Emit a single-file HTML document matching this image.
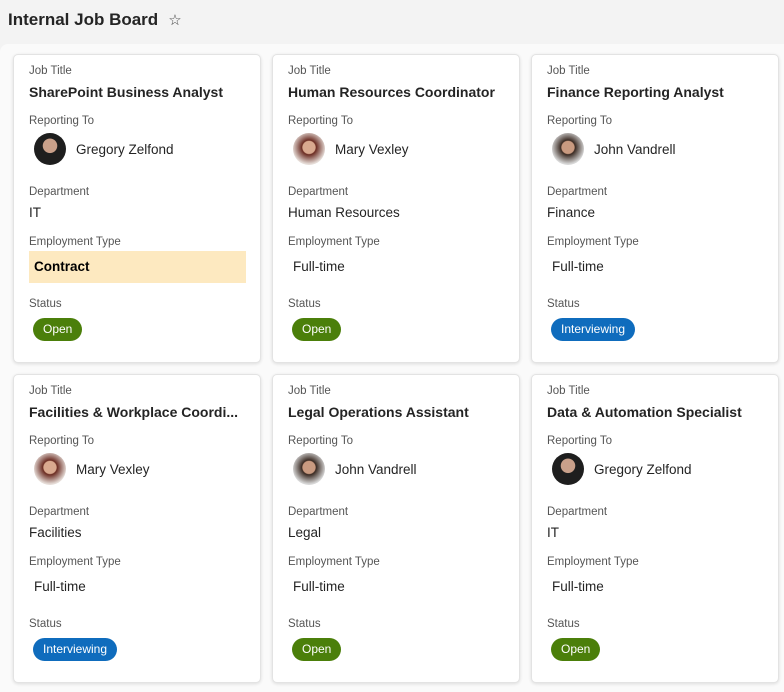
<!DOCTYPE html>
<html><head><style>
body{margin:0;width:784px;height:692px;background:#f3f3f3;font-family:"Liberation Sans",sans-serif;position:relative;overflow:hidden}
.hdr{position:absolute;left:8px;top:10px;font-size:17px;font-weight:600;color:#242424}
.hdr span{font-size:15px;margin-left:10px;font-weight:normal;color:#444}
.main{position:absolute;left:0;top:44px;width:784px;height:648px;background:#fafafa;border-radius:8px 0 0 0}
.card{position:absolute;width:246px;height:307px;background:#fff;border:1px solid #e3e3e3;border-radius:5px;box-shadow:0 1px 3px rgba(0,0,0,.12)}
.l{position:absolute;left:15px;font-size:11.5px;color:#555}
.v{position:absolute;left:15px;font-size:13.5px;color:#242424}
.t{font-size:14px;font-weight:600;top:29px !important}
.av{position:absolute;left:20px;width:32px;height:32px;border-radius:50%}
.pn{position:absolute;left:62px;font-size:13.5px;color:#242424}
.et{position:absolute;left:15px;width:202px;height:32px;top:196px;line-height:32px;padding-left:5px;font-size:13.5px;color:#242424}
.et.c{background:#fde9c0;font-weight:bold;color:#000;width:212px}
.pill{position:absolute;left:19px;top:263px;height:23px;line-height:23px;border-radius:12px;color:#fff;font-size:12px;padding:0 10px}
.o{background:#4b7f0a}.i{background:#0f6cbd}
</style></head><body>
<div class="hdr">Internal Job Board<span>☆</span></div>
<div class="main"></div>
<div class="card" style="left:13px;top:54px">
<div class="l" style="top:10px">Job Title</div><div class="v t">SharePoint Business Analyst</div>
<div class="l" style="top:60px">Reporting To</div><div class="av" style="top:78px;background:radial-gradient(circle at 50% 40%,#c9a08a 0 28%,#1e1e1e 30%)"></div><div class="pn" style="top:87px">Gregory Zelfond</div>
<div class="l" style="top:131px">Department</div><div class="v" style="top:150px">IT</div>
<div class="l" style="top:181px">Employment Type</div><div class="et c">Contract</div>
<div class="l" style="top:243px">Status</div><div class="pill o">Open</div></div>
<div class="card" style="left:272px;top:54px">
<div class="l" style="top:10px">Job Title</div><div class="v t">Human Resources Coordinator</div>
<div class="l" style="top:60px">Reporting To</div><div class="av" style="top:78px;background:radial-gradient(circle at 50% 45%,#d9a98f 0 26%,#6b2c22 30%,#e6ddd8 70%)"></div><div class="pn" style="top:87px">Mary Vexley</div>
<div class="l" style="top:131px">Department</div><div class="v" style="top:150px">Human Resources</div>
<div class="l" style="top:181px">Employment Type</div><div class="et">Full-time</div>
<div class="l" style="top:243px">Status</div><div class="pill o">Open</div></div>
<div class="card" style="left:531px;top:54px">
<div class="l" style="top:10px">Job Title</div><div class="v t">Finance Reporting Analyst</div>
<div class="l" style="top:60px">Reporting To</div><div class="av" style="top:78px;background:radial-gradient(circle at 50% 45%,#c99a80 0 26%,#3a2a22 30%,#d8d8d8 70%)"></div><div class="pn" style="top:87px">John Vandrell</div>
<div class="l" style="top:131px">Department</div><div class="v" style="top:150px">Finance</div>
<div class="l" style="top:181px">Employment Type</div><div class="et">Full-time</div>
<div class="l" style="top:243px">Status</div><div class="pill i">Interviewing</div></div>
<div class="card" style="left:13px;top:374px">
<div class="l" style="top:10px">Job Title</div><div class="v t">Facilities &amp; Workplace Coordi...</div>
<div class="l" style="top:60px">Reporting To</div><div class="av" style="top:78px;background:radial-gradient(circle at 50% 45%,#d9a98f 0 26%,#6b2c22 30%,#e6ddd8 70%)"></div><div class="pn" style="top:87px">Mary Vexley</div>
<div class="l" style="top:131px">Department</div><div class="v" style="top:150px">Facilities</div>
<div class="l" style="top:181px">Employment Type</div><div class="et">Full-time</div>
<div class="l" style="top:243px">Status</div><div class="pill i">Interviewing</div></div>
<div class="card" style="left:272px;top:374px">
<div class="l" style="top:10px">Job Title</div><div class="v t">Legal Operations Assistant</div>
<div class="l" style="top:60px">Reporting To</div><div class="av" style="top:78px;background:radial-gradient(circle at 50% 45%,#c99a80 0 26%,#3a2a22 30%,#d8d8d8 70%)"></div><div class="pn" style="top:87px">John Vandrell</div>
<div class="l" style="top:131px">Department</div><div class="v" style="top:150px">Legal</div>
<div class="l" style="top:181px">Employment Type</div><div class="et">Full-time</div>
<div class="l" style="top:243px">Status</div><div class="pill o">Open</div></div>
<div class="card" style="left:531px;top:374px">
<div class="l" style="top:10px">Job Title</div><div class="v t">Data &amp; Automation Specialist</div>
<div class="l" style="top:60px">Reporting To</div><div class="av" style="top:78px;background:radial-gradient(circle at 50% 40%,#c9a08a 0 28%,#1e1e1e 30%)"></div><div class="pn" style="top:87px">Gregory Zelfond</div>
<div class="l" style="top:131px">Department</div><div class="v" style="top:150px">IT</div>
<div class="l" style="top:181px">Employment Type</div><div class="et">Full-time</div>
<div class="l" style="top:243px">Status</div><div class="pill o">Open</div></div>
</body></html>
